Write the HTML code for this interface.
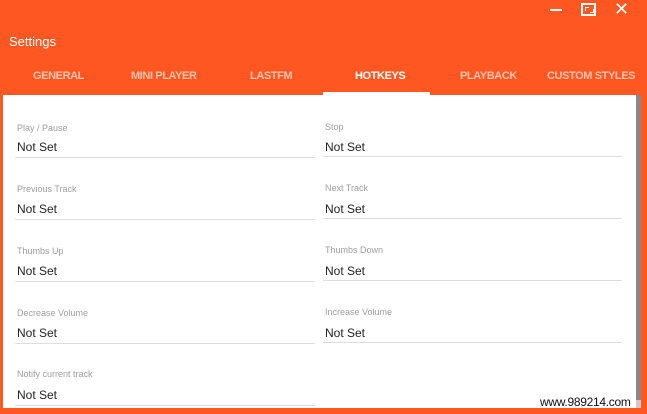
<!DOCTYPE html><html><head><style>
body{margin:0;width:647px;height:414px;background:#ff5722;position:relative;overflow:hidden;font-family:"Liberation Sans",sans-serif}
.a{position:absolute}
.tab{position:absolute;top:70px;font-size:11px;font-weight:bold;color:#ffc3ae;letter-spacing:-0.4px}
.lbl{position:absolute;font-size:9px;color:#9e9e9e}
.val{position:absolute;font-size:12px;color:#222}
.ln{position:absolute;height:1px;background:#ddd}
</style></head><body>
<div class="a" style="left:550px;top:9px;width:12px;height:2px;background:#fff"></div>
<div class="a" style="left:581px;top:3px;width:15px;height:13px;border:2px solid #fff;box-sizing:border-box"></div>
<div class="a" style="left:585px;top:7px;width:3px;height:3px;border-left:1.5px solid #fff;border-top:1.5px solid #fff"></div>
<div class="a" style="left:590px;top:9px;width:3px;height:3px;border-right:1.5px solid #fff;border-bottom:1.5px solid #fff"></div>
<div class="a" style="left:614px;top:-1px;color:#fff;font-size:18px">✕</div>
<div class="a" style="left:9px;top:34px;color:#fff;font-size:13px">Settings</div>
<div class="tab" style="left:33px">GENERAL</div>
<div class="tab" style="left:131px">MINI PLAYER</div>
<div class="tab" style="left:250px">LASTFM</div>
<div class="tab" style="left:355px;color:#fff">HOTKEYS</div>
<div class="tab" style="left:460px">PLAYBACK</div>
<div class="tab" style="left:547px">CUSTOM STYLES</div>
<div class="a" style="left:3px;top:95px;width:634px;height:313px;background:#fff"></div>
<div class="a" style="left:323px;top:92px;width:107px;height:3px;background:#fff"></div>
<div class="a" style="left:636px;top:95px;width:5px;height:305px;background:#888"></div>
<div class="a" style="left:636px;top:400px;width:5px;height:8px;background:#ccc"></div>

<div class="lbl" style="left:17px;top:123px">Play / Pause</div><div class="val" style="left:17px;top:140px">Not Set</div><div class="ln" style="left:15px;top:157px;width:300px"></div>
<div class="lbl" style="left:325px;top:122px">Stop</div><div class="val" style="left:325px;top:140px">Not Set</div><div class="ln" style="left:323px;top:156px;width:299px"></div>
<div class="lbl" style="left:17px;top:184px">Previous Track</div><div class="val" style="left:17px;top:202px">Not Set</div><div class="ln" style="left:15px;top:219px;width:300px"></div>
<div class="lbl" style="left:325px;top:183px">Next Track</div><div class="val" style="left:325px;top:202px">Not Set</div><div class="ln" style="left:323px;top:218px;width:299px"></div>
<div class="lbl" style="left:17px;top:246px">Thumbs Up</div><div class="val" style="left:17px;top:264px">Not Set</div><div class="ln" style="left:15px;top:281px;width:300px"></div>
<div class="lbl" style="left:325px;top:245px">Thumbs Down</div><div class="val" style="left:325px;top:264px">Not Set</div><div class="ln" style="left:323px;top:280px;width:299px"></div>
<div class="lbl" style="left:17px;top:308px">Decrease Volume</div><div class="val" style="left:17px;top:326px">Not Set</div><div class="ln" style="left:15px;top:343px;width:300px"></div>
<div class="lbl" style="left:325px;top:307px">Increase Volume</div><div class="val" style="left:325px;top:326px">Not Set</div><div class="ln" style="left:323px;top:342px;width:299px"></div>
<div class="lbl" style="left:17px;top:369px">Notify current track</div><div class="val" style="left:17px;top:388px">Not Set</div><div class="ln" style="left:15px;top:405px;width:300px"></div>
<div class="a" style="left:540px;top:395px;font-size:12px;color:#111;letter-spacing:-0.3px">www.989214.com</div>
</body></html>
